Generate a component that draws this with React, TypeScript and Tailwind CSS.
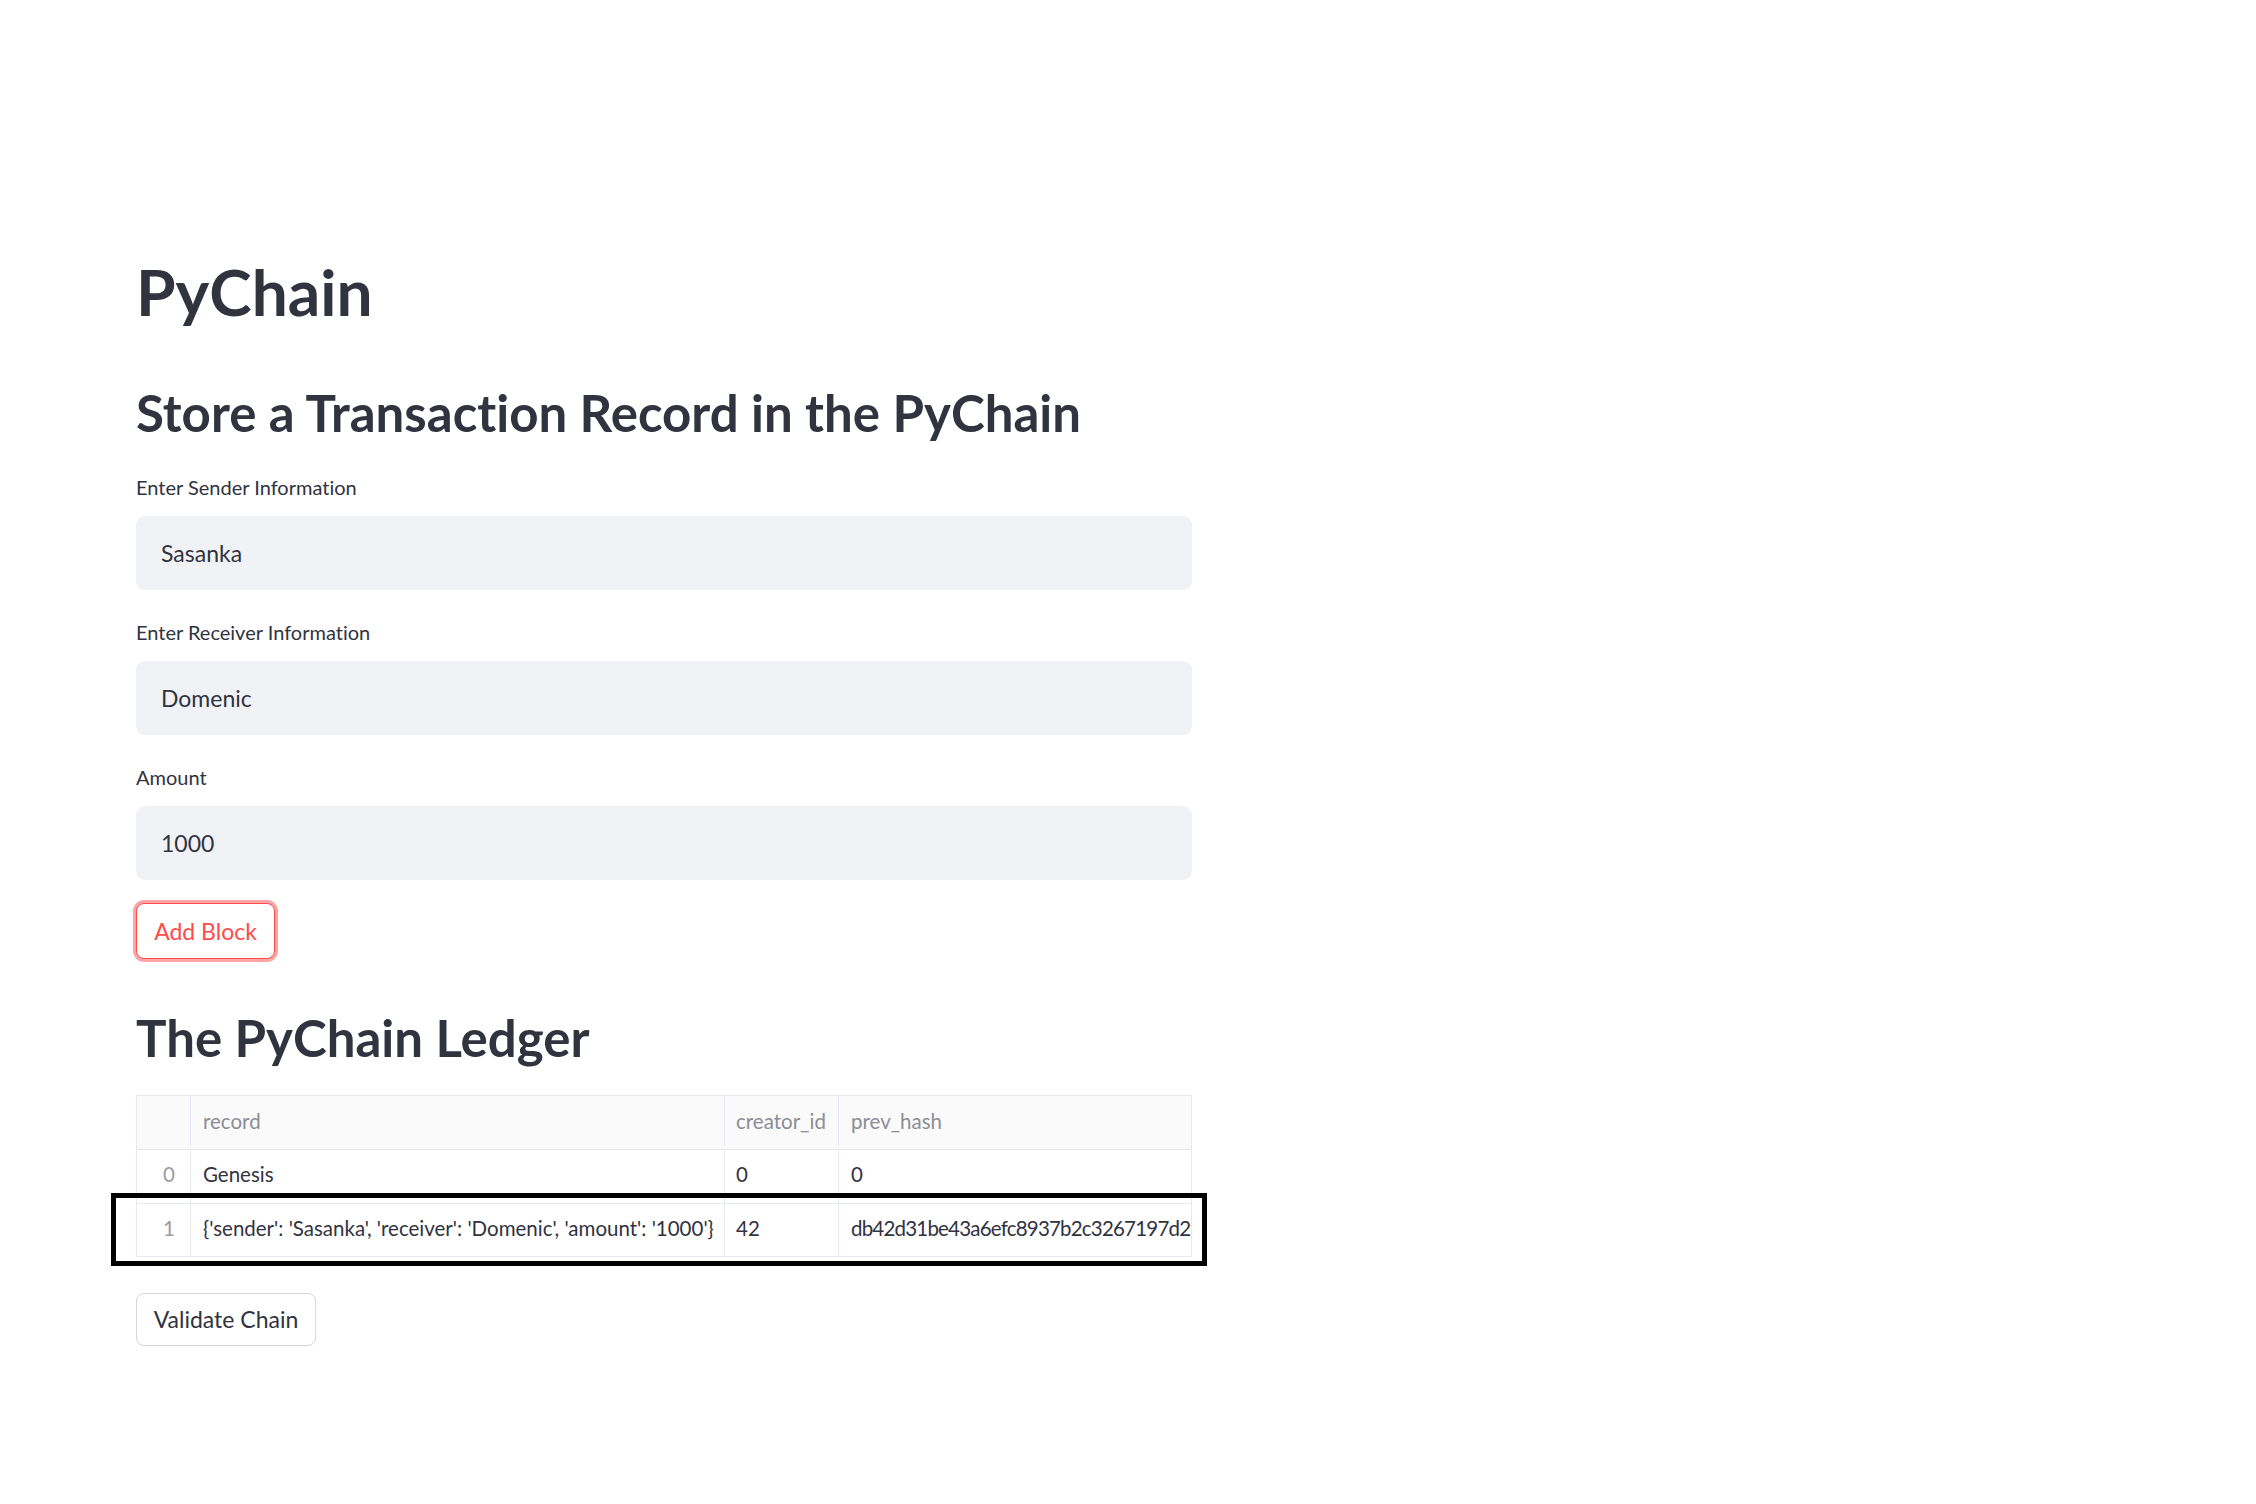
import React from 'react';

const rows = [
  { idx: '0', record: 'Genesis', creator: '0', hash: '0' },
  {
    idx: '1',
    record: "{'sender': 'Sasanka', 'receiver': 'Domenic', 'amount': '1000'}",
    creator: '42',
    hash: 'db42d31be43a6efc8937b2c3267197d2f4c0e1a9b8d76e35f20c4b91a7e6d3c8',
  },
];

const cols = 'grid grid-cols-[54px_534px_114px_1fr]';

function Field({ label, value }: { label: string; value: string }) {
  return (
    <div className="flex flex-col">
      <label className="text-[20px] leading-[28px]">{label}</label>
      <input
        readOnly
        value={value}
        className="mt-[15px] h-[74px] w-full rounded-[9px] border-0 bg-[#f0f2f6] px-[25px] text-[23px] text-[#31333f] outline-none"
      />
    </div>
  );
}

function Ledger() {
  return (
    <div className="relative mt-[27px]">
      <div className="border border-[#e6e9ef]">
        <div className={`${cols} h-[54px] border-b border-[#e6e9ef] bg-[#fafafa] pb-[3px] text-[20.5px] text-[#8b8d96]`}>
          <div className="border-r border-[#e6e9ef]" />
          <div className="flex items-center border-r border-[#e6e9ef] px-[12px]">record</div>
          <div className="flex items-center border-r border-[#e6e9ef] px-[11px]">creator_id</div>
          <div className="flex items-center px-[12px]">prev_hash</div>
        </div>
        {rows.map((r, i) => (
          <div
            key={r.idx}
            className={`${cols} text-[20.5px] ${i === 0 ? 'h-[54px] border-b border-[#e6e9ef]' : 'h-[52px]'}`}
          >
            <div className="flex items-center justify-end border-r border-[#e6e9ef] pr-[15px] pb-[4px] text-[#9a9ca5]">
              {r.idx}
            </div>
            <div className="flex items-center overflow-hidden whitespace-nowrap border-r border-[#e6e9ef] px-[12px] pb-[4px]">
              {r.record}
            </div>
            <div className="flex items-center border-r border-[#e6e9ef] px-[11px] pb-[4px]">{r.creator}</div>
            <div className="flex items-center overflow-hidden whitespace-nowrap pl-[12px] pb-[4px] tracking-[-0.8px]">
              {r.hash}
            </div>
          </div>
        ))}
      </div>
      {/* highlight box drawn over the second row */}
      <div className="pointer-events-none absolute left-[-25px] top-[98px] h-[73px] w-[1096px] border-[5px] border-black" />
    </div>
  );
}

export default function App() {
  return (
    <div className="min-h-screen bg-white font-[Lato,sans-serif] text-[#31333f] [font-variant-ligatures:none]">
      <main className="ml-[136px] w-[1056px] pt-[256px] pb-[100px]">
        <h1 className="text-[64px] font-bold leading-[72px]">PyChain</h1>
        <h2 className="mt-[55px] text-[51px] font-bold leading-[60px]">Store a Transaction Record in the PyChain</h2>

        <div className="mt-[30px] flex flex-col gap-[28px]">
          <Field label="Enter Sender Information" value="Sasanka" />
          <Field label="Enter Receiver Information" value="Domenic" />
          <Field label="Amount" value="1000" />
        </div>

        <button
          type="button"
          className="mt-[23px] flex h-[56px] w-[139px] items-center justify-center rounded-[8px] border border-[#ff4b4b] bg-white text-[23px] text-[#ff4b4b] ring-[3px] ring-[#ff4b4b]/50"
        >
          Add Block
        </button>

        <h2 className="mt-[49px] text-[51px] font-bold leading-[60px]">The PyChain Ledger</h2>

        <Ledger />

        <button
          type="button"
          className="mt-[36px] flex h-[53px] w-[180px] items-center justify-center rounded-[8px] border border-[#d6d6d9] bg-white text-[23px] text-[#31333f]"
        >
          Validate Chain
        </button>
      </main>
    </div>
  );
}
